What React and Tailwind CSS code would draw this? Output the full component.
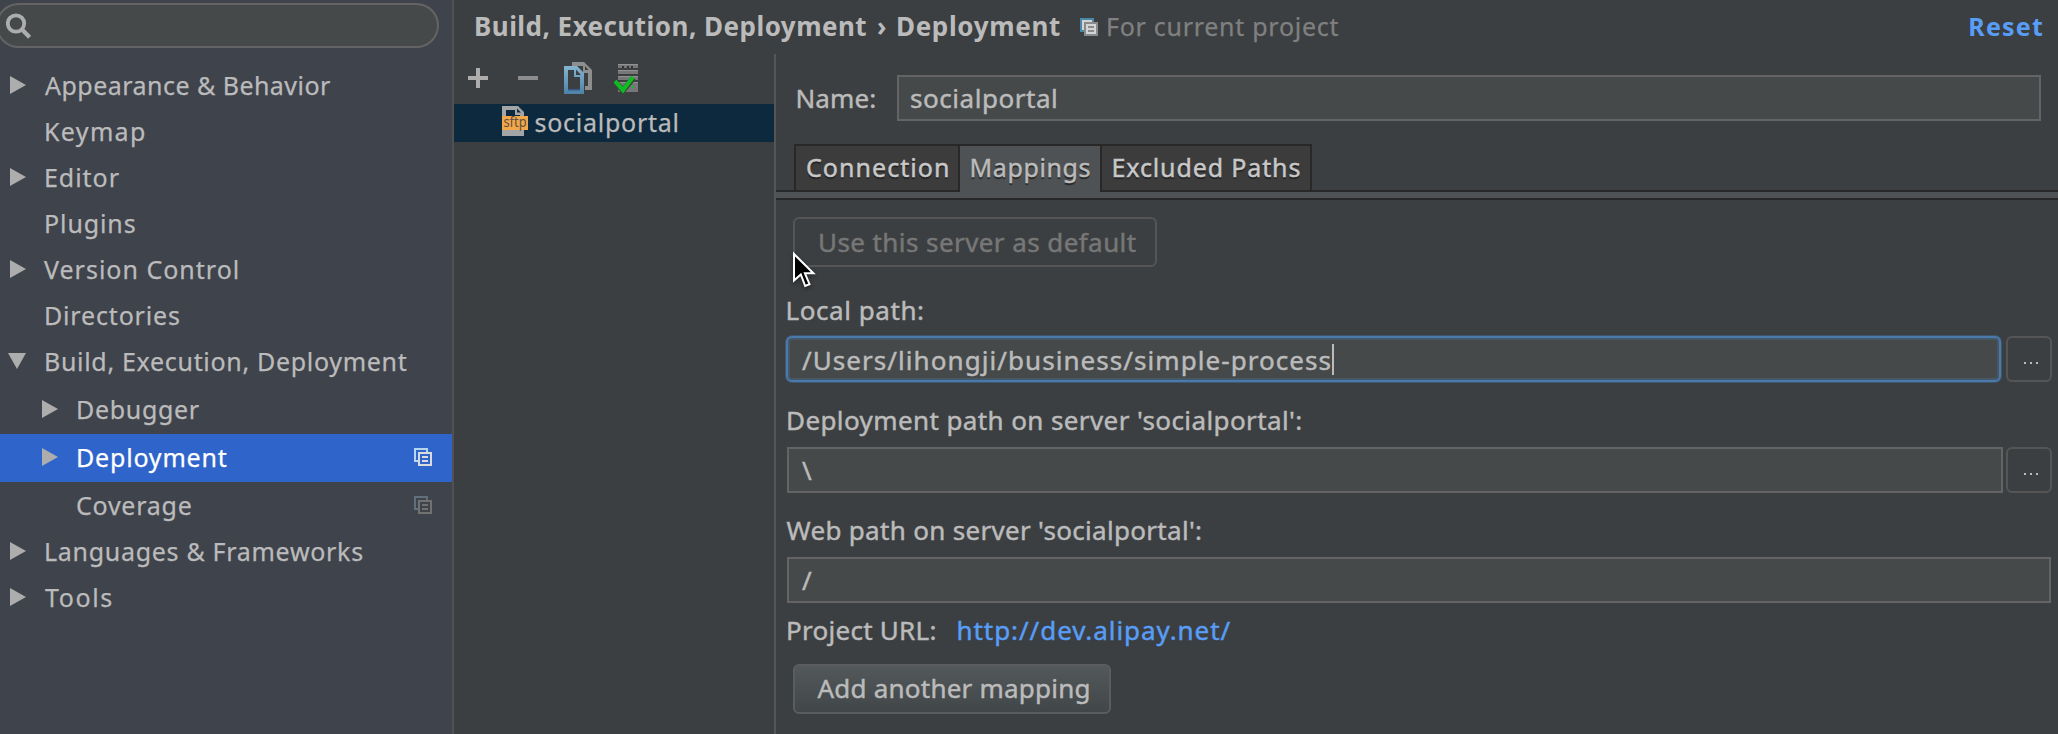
function Arrow({ open }) {
  return (
    <svg width="18" height="18" viewBox="0 0 18 18" className="shrink-0" fill="#adadad">
      {open ? <path d="M0 1h18L9 17z" /> : <path d="M2 0v18l16-9z" />}
    </svg>
  );
}

function CopyMark({ back, front, fill = "none" }) {
  return (
    <svg width="18" height="18" viewBox="0 0 18 18" className="shrink-0" shapeRendering="crispEdges">
      {fill !== "none" && <path d="M2 2h10v2H4v8H2z" fill={fill} />}
      <path d="M0 0h14v4h-2V2H2v10h2v2H0z" fill={back} />
      {fill !== "none" && <path d="M6 6h10v10H6z" fill={fill} />}
      <path d="M4 4h14v14H4zM6 6v10h10V6z" fillRule="evenodd" fill={front} />
      <path d="M8 8h6v2H8zM8 12h6v2H8z" fill={front} />
    </svg>
  );
}

const tree = [
  { label: "Appearance & Behavior", arrow: "closed", track: "tracking-[0.47px]", shift: "" },
  { label: "Keymap", track: "tracking-[1.35px]", shift: "-ml-px" },
  { label: "Editor", arrow: "closed", track: "tracking-[0.95px]", shift: "-ml-px" },
  { label: "Plugins", track: "tracking-[0.9px]", shift: "-ml-px" },
  { label: "Version Control", arrow: "closed", track: "tracking-[1px]", shift: "-ml-px" },
  { label: "Directories", track: "tracking-[0.83px]", shift: "-ml-px" },
  { label: "Build, Execution, Deployment", arrow: "open", track: "tracking-[0.69px]", shift: "-ml-px", tall: true },
  { label: "Debugger", arrow: "closed", track: "tracking-[0.68px]", shift: "-ml-px", child: true, tall: true },
  { label: "Deployment", arrow: "closed", track: "tracking-[0.81px]", shift: "-ml-px", child: true, tall: true, selected: true, mark: true },
  { label: "Coverage", track: "tracking-[0.74px]", shift: "-ml-px", child: true, mark: true },
  { label: "Languages & Frameworks", arrow: "closed", track: "tracking-[0.7px]", shift: "-ml-px" },
  { label: "Tools", arrow: "closed", track: "tracking-[1.6px]", shift: "" },
];

function TreeRow({ row }) {
  return (
    <div className={`${row.tall ? "h-12 pb-0.5" : "h-[46px]"} ${row.child ? "pl-10" : "pl-2"} ${row.selected ? "bg-[#2f65ca] text-white" : ""} flex items-center pr-5`}>
      {row.arrow ? <Arrow open={row.arrow === "open"} /> : <span className="w-[18px]" />}
      <span className="ml-[19px] flex-1 pb-px leading-9">
        <span className={`${row.track} ${row.shift} inline-block`}>{row.label}</span>
      </span>
      {row.mark && (row.selected ? <CopyMark back="#b5d5ee" front="#d8dade" /> : <CopyMark back="#5f707c" front="#717171" />)}
    </div>
  );
}

function Sidebar() {
  return (
    <aside className="flex w-[454px] shrink-0 flex-col overflow-hidden border-r-2 border-[#515151] bg-[#3f434c] text-[25px] text-[#bbbbbb] [-webkit-text-stroke:0.25px]">
      <div className="-ml-1 mt-[3px] flex h-[45px] w-[443px] items-center rounded-full border-2 border-[#646464] bg-[#45494a] pl-2">
        <svg width="26" height="26" viewBox="0 0 26 26" fill="none" stroke="#adadad">
          <circle cx="10" cy="10.5" r="8.2" strokeWidth="3.8" />
          <path d="M16 16.5l7.6 7.8" strokeWidth="4.2" />
        </svg>
      </div>
      <div className="mt-[14px]">
        {tree.map((row) => <TreeRow key={row.label} row={row} />)}
      </div>
    </aside>
  );
}

function Header() {
  return (
    <header className="flex h-[54px] shrink-0 items-start pl-[20px] pr-[14px] pt-2 text-[26px] leading-9 text-[#bbbbbb]">
      <span className="w-[403px] font-bold tracking-[0.47px]">Build, Execution, Deployment</span>
      <span className="w-[19px] font-bold">›</span>
      <span className="w-[184px] font-bold tracking-[0.65px]">Deployment</span>
      <span className="mt-2.5"><CopyMark back="#4a88aa" front="#8a8a8a" fill="#d2d4d6" /></span>
      <span className="ml-[8px] text-[25px] tracking-[0.72px] text-[#808080] [-webkit-text-stroke:0.25px]">For current project</span>
      <span className="ml-auto text-[25px] font-bold tracking-[1.2px] text-[#589df6]">Reset</span>
    </header>
  );
}

function ServerList() {
  return (
    <section className="flex w-[322px] shrink-0 flex-col border-r-2 border-[#555555]">
      <div className="flex h-[50px] items-start pl-[14px] pt-2">
        <svg className="mt-1.5" width="20" height="20" viewBox="0 0 20 20" fill="#adadad"><path d="M8 0h4v8h8v4h-8v8H8v-8H0V8h8z" /></svg>
        <svg className="ml-[30px] mt-[14px]" width="20" height="4" fill="#8c8c8c"><path d="M0 0h20v4H0z" /></svg>
        <svg className="ml-[26px]" width="28" height="32" viewBox="0 0 28 32">
          <defs><linearGradient id="page" x2="0" y2="1"><stop stopColor="#86b5d2" /><stop offset="1" stopColor="#4f82a8" /></linearGradient></defs>
          <path d="M8 0h12l8 8v20h-7v-4h3V11h-5V4H8z" fill="#8e8e8e" />
          <path d="M21 4v4h3.500z" fill="#3c3f41" />
          <path fillRule="evenodd" d="M0 4h13l7 7v21H0zM4 8v20h12V15h-6V8z" fill="url(#page)" />
          <path d="M12 7.500v5.500h5z" fill="#3c3f41" />
          <path d="M4 28h12" stroke="#3568a0" strokeWidth="1.500" />
        </svg>
        <svg className="ml-[22px] mt-0.5" width="25" height="31" viewBox="0 0 25 31">
          <path d="M4 0h20v4H4zM4 6h20v4H4zM4 12h20v4H4zM4 18h20v10H4z" fill="#777777" />
          <path d="M4 .5h20M4 6.500h20M4 12.500h20M4 18.500h20" stroke="#929292" />
          <path d="M8 2h2v2H8zM13 2h2v2h-2zM17 2h2v2h-2z" fill="#333333" />
          <path d="M1.500 18l7.500 8.500L19.500 14" fill="none" stroke="#2d5030" strokeWidth="5.500" />
          <path d="M1 17l8 9L19 13" fill="none" stroke="#0fbd22" strokeWidth="4" />
          <path d="M18 22h2v2h-2z" fill="#0fbd22" />
        </svg>
      </div>
      <div className="flex h-[38px] items-start bg-[#0d293e] pl-12 text-[25px] text-[#bbbbbb] [-webkit-text-stroke:0.25px]">
        <svg className="mt-0.5 shrink-0" width="26" height="30" viewBox="0 0 26 30">
          <path fillRule="evenodd" d="M0 0h16l6 6v24H0zM4 4v20h14V9h-5V4z" fill="#a3a5a7" />
          <path d="M15 2.500v4h4z" fill="#0d293e" />
          <path d="M0 10h26v14H0z" fill="#f2a748" />
          <text x="1.500" y="20.500" fontSize="13.500" textLength="23" lengthAdjust="spacingAndGlyphs" fill="#5c5044" stroke="none">sftp</text>
        </svg>
        <span className="ml-[6.5px] leading-9 tracking-[0.74px]">socialportal</span>
      </div>
    </section>
  );
}

function Field({ children, className }) {
  return (
    <div className={`${className} h-[46px] border-2 border-[#646464] bg-[#45494a] leading-[42px] text-[#bbbbbb]`}>{children}</div>
  );
}

function BrowseButton() {
  return (
    <button className="flex h-[46px] w-[46px] items-center justify-center gap-1 rounded-md border-2 border-[#555555] pl-1 pt-[7px]">
      <i className="size-0.5 bg-[#bbbbbb]" />
      <i className="size-0.5 bg-[#bbbbbb]" />
      <i className="size-0.5 bg-[#bbbbbb]" />
    </button>
  );
}

function Tabs() {
  return (
    <div>
      <div className="flex h-12 items-stretch text-[25px] leading-9 text-[#c8c8c8] [text-shadow:0_2px_1px_#222]">
        <div className="w-[18px] border-b-2 border-[#282828]" />
        <div className="w-[166px] border-2 border-[#282828] bg-[#3c3c3d] pl-2.5 pt-[3px] tracking-[1.05px]">Connection</div>
        <div className="w-[140px] border-t-2 border-[#282828] bg-[#4e5254] pl-[9.500px] pt-[3px] tracking-[0.61px] text-[#bbbbbb]">Mappings</div>
        <div className="w-[212px] border-2 border-[#282828] bg-[#3c3c3d] pl-[9.500px] pt-[3px] tracking-[0.88px]">Excluded Paths</div>
        <div className="flex-1 border-b-2 border-[#282828]" />
      </div>
      <div className="h-2 border-b-2 border-[#282828] bg-[#4e5254]" />
    </div>
  );
}

function Editor() {
  return (
    <section className="flex flex-1 flex-col text-[26px] leading-9 text-[#bbbbbb] [-webkit-text-stroke:0.45px]">
      <div className="flex h-[90px] items-start pl-[19.500px] pt-[21px]">
        <span className="w-[101.500px] pt-[5px] tracking-[0.1px]">Name:</span>
        <Field className="w-[1144px] pl-[11px] tracking-[0.54px]">socialportal</Field>
      </div>
      <Tabs />
      <div className="flex flex-col items-start pl-[11px] pt-[17px]">
        <button className="ml-[6px] h-[50px] w-[364px] rounded-md border-2 border-[#555555] pb-px pl-[23px] text-left tracking-[0.42px] text-[#777777]">Use this server as default</button>
        <div className="-ml-[1.500px] mt-[25px] tracking-[0.56px]">Local path:</div>
        <div className="-ml-px mt-2 flex gap-[5px]">
          <div className="flex h-[46px] w-[1215px] items-center rounded-md border-2 border-[#4a79ab] bg-[#45494a] pl-3.5 shadow-[inset_0_0_0_2px_#465867,0_0_0_1px_#3f556c]">
            <span className="pt-px tracking-[1.06px]">/Users/lihongji/business/simple-process</span>
            <i className="h-[31px] w-0.5 bg-[#bbbbbb]" />
          </div>
          <BrowseButton />
        </div>
        <div className="-ml-px mt-5 tracking-[0.4px]">Deployment path on server 'socialportal':</div>
        <div className="mt-[9px] flex gap-[3px]">
          <Field className="w-[1216px] pl-[13px]">\</Field>
          <BrowseButton />
        </div>
        <div className="-ml-[0.500px] mt-[19px] tracking-[0.31px]">Web path on server 'socialportal':</div>
        <Field className="mt-[9px] w-[1264px] pl-[13px]">/</Field>
        <div className="-ml-px mt-[9px] flex">
          <span className="w-[170.500px] tracking-[0.27px]">Project URL:</span>
          <a className="tracking-[0.94px] text-[#589df6]">http://dev.alipay.net/</a>
        </div>
        <button className="ml-[6px] mt-4 h-[50px] w-[318px] rounded-md border-2 border-[#5a5c5d] bg-linear-to-b from-[#53585a] to-[#414648] pb-[3px] pl-[22.500px] text-left tracking-[0.22px]">Add another mapping</button>
      </div>
    </section>
  );
}

function Pointer() {
  return (
    <svg className="absolute left-[790px] top-[248px] drop-shadow-[0_2px_2px_rgba(0,0,0,0.4)]" width="30" height="44" viewBox="0 0 30 44">
      <path d="M4 6v26.500l6.800-6 4.400 11.500 4.300-1.800-4.600-10.900h8.500z" fill="#000" stroke="#fff" strokeWidth="2" />
    </svg>
  );
}

export default function App() {
  return (
    <div className="relative flex h-[734px] w-[2058px] overflow-hidden whitespace-nowrap bg-[#3c3f41] font-['Noto_Sans',sans-serif]">
      <Sidebar />
      <main className="flex min-w-0 flex-1 flex-col">
        <Header />
        <div className="flex min-h-0 flex-1">
          <ServerList />
          <Editor />
        </div>
      </main>
      <Pointer />
    </div>
  );
}
